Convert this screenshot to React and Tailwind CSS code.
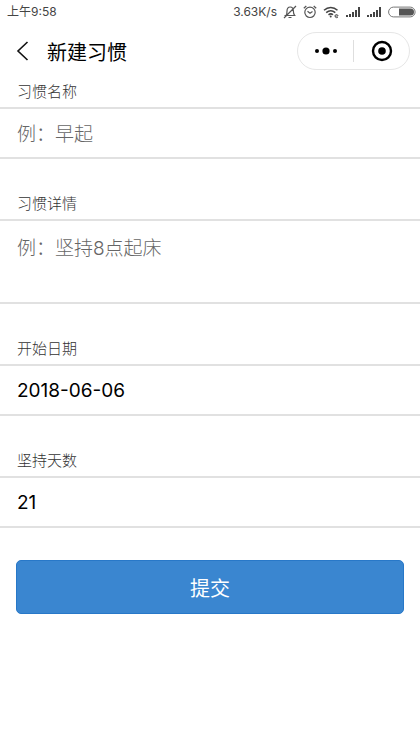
import React from 'react';

const fieldBox =
  'block w-full border-y-2 border-[#e1e1e1] bg-white px-[17px] text-[19px] leading-6 text-black outline-none placeholder:text-[#666666] placeholder:opacity-100';

function Field({ id, label, first, children }) {
  return (
    <div className={first ? '' : 'pt-[35px]'}>
      <label htmlFor={id} className="block px-[17px] pb-[5px] text-[15px] leading-5 font-light text-[#333333]">
        {label}
      </label>
      {children}
    </div>
  );
}

function BellOff() {
  return (
    <svg width="14" height="14" viewBox="0 0 14 14" fill="none" stroke="#555" strokeWidth="1.2">
      <path d="M1.500 10.500h11M3 10.300c1-1 1-2 1-4C4 4 5 2 7.200 2s3.200 2 3.200 4.300c0 2 .2 3 1.200 4M5.500 12.500h3M13 1 1 13" />
    </svg>
  );
}

function Alarm() {
  return (
    <svg width="14" height="14" viewBox="0 0 14 14" fill="none" stroke="#555" strokeWidth="1.2">
      <circle cx="7" cy="7.300" r="5.200" />
      <path d="M4.500 6.300 7 8.200l2.500-1.700M.8 3.300 3.300 1M13.200 3.300 10.700 1" />
    </svg>
  );
}

function Wifi() {
  return (
    <svg width="17" height="14" viewBox="0 0 17 14" fill="none" stroke="#444" strokeWidth="1.500">
      <path d="M1 5.200c4-3.600 9.500-3.600 13.500 0M3.200 7.600c2.700-2.300 6.400-2.300 9.100 0M5.500 9.800c1.400-1.100 3.200-1.100 4.500 0" />
      <circle cx="7.700" cy="11.500" r="1" fill="#444" stroke="none" />
      <path d="M12 11h3c0-2-3-2-3 0s2 2 3 1.200" strokeWidth=".9" />
    </svg>
  );
}

function Signal() {
  return (
    <svg width="15" height="12" viewBox="0 0 15 12" fill="#444">
      <path d="M0 9h2v2H0zM3 8h2v3H3zM6 6h2v5H6zM9 4h2v7H9zM12 1h2v10h-2z" />
    </svg>
  );
}

function Battery() {
  return (
    <svg width="28" height="12" viewBox="0 0 28 12">
      <rect x=".6" y="1.100" width="26.500" height="9.800" rx="4.900" fill="#fff" stroke="#777" />
      <path d="M11 2.500h11.500a3.500 3.500 0 0 1 0 7H11z" fill="#555" />
    </svg>
  );
}

export default function App() {
  return (
    <div className="min-h-screen bg-white font-['Inter','Noto_Sans_CJK_SC',sans-serif]">
      <header>
        <div className="flex h-6 items-center justify-between pr-1 pl-[7px] text-[12px] text-[#444444]">
          <span>上午9:58</span>
          <div className="flex items-center">
            <span className="pr-[6px]">3.63K/s</span>
            <span className="flex items-center gap-[6px]">
              <BellOff />
              <Alarm />
              <Wifi />
              <Signal />
              <Signal />
              <Battery />
            </span>
          </div>
        </div>
        <nav className="flex h-[54px] items-center pr-[10px] pl-4">
          <button type="button" aria-label="返回" className="flex h-8 w-[31px] items-center">
            <svg width="14" height="22" viewBox="0 0 14 22" fill="none" stroke="#111" strokeWidth="1.600">
              <path d="M11.500 2 2 11l9.500 9" />
            </svg>
          </button>
          <h1 className="flex-1 pt-[3px] text-[20px] leading-7 text-black">新建习惯</h1>
          <div className="flex h-[38px] w-[113px] items-center rounded-full border border-[#e6e6e6]">
            <button type="button" aria-label="更多" className="flex h-full flex-1 items-center justify-center">
              <svg width="24" height="8" viewBox="0 0 24 8">
                <circle cx="3" cy="4" r="2" />
                <circle cx="12" cy="4" r="3.600" />
                <circle cx="21" cy="4" r="2" />
              </svg>
            </button>
            <span className="h-[22px] w-px bg-[#dedede]" />
            <button type="button" aria-label="关闭" className="flex h-full flex-1 items-center justify-center">
              <svg width="22" height="22" viewBox="0 0 22 22">
                <circle cx="11" cy="11" r="9" fill="none" stroke="#000" strokeWidth="2.400" />
                <circle cx="11" cy="11" r="3.800" />
              </svg>
            </button>
          </div>
        </nav>
      </header>

      <form className="pt-1" onSubmit={(e) => e.preventDefault()}>
        <Field id="name" label="习惯名称" first>
          <input id="name" type="text" placeholder="例：早起" className={`${fieldBox} h-[52px] pt-[2px] placeholder:font-light`} />
        </Field>
        <Field id="detail" label="习惯详情">
          <textarea
            id="detail"
            placeholder="例：坚持8点起床"
            className={`${fieldBox} h-[85px] resize-none pt-4 placeholder:font-light`}
          />
        </Field>
        <Field id="start" label="开始日期">
          <input id="start" type="text" defaultValue="2018-06-06" className={`${fieldBox} h-[52px]`} />
        </Field>
        <Field id="days" label="坚持天数">
          <input id="days" type="text" inputMode="numeric" defaultValue="21" className={`${fieldBox} h-[52px]`} />
        </Field>
        <div className="px-4 pt-8">
          <button
            type="submit"
            className="h-[54px] w-full rounded-[5px] border border-[#2878c8] bg-[#3a86d0] pt-[3px] text-[20px] text-white"
          >
            提交
          </button>
        </div>
      </form>
    </div>
  );
}
